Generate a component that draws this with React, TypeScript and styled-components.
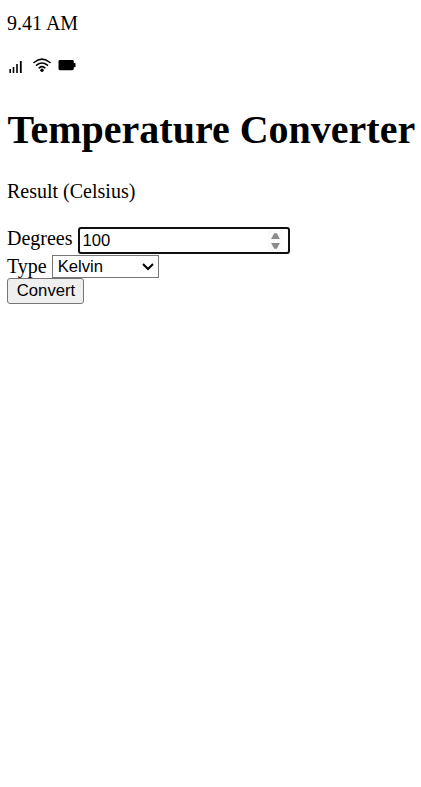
import React, { useState } from "react";
import styled, { createGlobalStyle } from "styled-components";

const GlobalStyle = createGlobalStyle`
  * { box-sizing: border-box; }
  body { margin: 0; background: #fff; color: #000; }
`;

const Page = styled.main`
  display: flex;
  flex-direction: column;
  align-items: flex-start;
  padding: 12px 0 0 7px;
  font-family: "Liberation Serif", "Times New Roman", serif;
  font-size: 20px;
  line-height: 23px;
  white-space: nowrap;
`;

const Time = styled.div`
  height: 23px;
`;

const StatusIcons = styled.div`
  display: flex;
  align-items: flex-start;
  height: 20px;
  margin-top: 21px;
  padding-left: 2px;
`;

const StatusIcon = styled.svg<{ $gap?: number }>`
  display: block;
  flex: none;
  margin-left: ${({ $gap = 0 }) => $gap}px;
`;

const Title = styled.h1`
  margin: 31px 0 0;
  padding-left: 0.5px;
  font-size: 40px;
  font-weight: 700;
  line-height: 46px;
`;

const Result = styled.p`
  margin: 27px 0 0;
`;

const Form = styled.form`
  display: flex;
  flex-direction: column;
  align-items: flex-start;
  margin-top: 24px;
`;

const Row = styled.label<{ $height: number }>`
  display: flex;
  align-items: flex-start;
  gap: 5px;
  height: ${({ $height }) => $height}px;
`;

const Field = styled.span`
  display: flex;
  width: 212px;
  height: 27px;
  padding-right: 5px;
  border: 2px solid #101010;
  border-radius: 3px;
  background: #fff;
`;

const NumberInput = styled.input`
  flex: 1;
  min-width: 0;
  padding: 0 0 0 3px;
  border: 0;
  outline: 0;
  background: transparent;
  color: #000;
  font: 16.67px/23px "Liberation Sans", Arial, sans-serif;
`;

const Spinner = styled.svg`
  display: block;
  flex: none;
  margin-top: 1px;
`;

const SelectBox = styled.span`
  display: flex;
  align-items: center;
  justify-content: space-between;
  width: 107px;
  height: 23px;
  padding: 0 4px 0 5px;
  border: 1px solid #767676;
  background: #fff;
  font: 16.67px/21px "Liberation Sans", Arial, sans-serif;
`;

const ConvertButton = styled.button`
  width: 77px;
  height: 26px;
  padding: 0 0 0 1px;
  border: 1px solid #767676;
  border-radius: 3px;
  background: #efefef;
  color: #000;
  font: 16.67px/22px "Liberation Sans", Arial, sans-serif;
`;

export default function App() {
  const [degrees, setDegrees] = useState("100");
  return (
    <>
      <GlobalStyle />
      <Page>
        <Time>9.41 AM</Time>
        <StatusIcons>
          <StatusIcon width="14" height="20" viewBox="0 0 14 20">
            <path d="M.4 13H2v4H.4zM3.7 11h1.6v6H3.7zM7.2 8h1.6v9H7.2zM10.9 5h1.8v12h-1.8z" />
          </StatusIcon>
          <StatusIcon $gap={10} width="18" height="18" viewBox="0 0 18 18" fill="none" stroke="#000" strokeWidth="1.6" strokeLinecap="round">
            <path d="M1 6.5Q9-.1 17 6.5M3.6 9.2Q9 4.8 14.4 9.2M6.2 11.8Q9 9.5 11.8 11.8" />
            <circle cx="9" cy="14.3" r="1.7" fill="#000" stroke="none" />
          </StatusIcon>
          <StatusIcon $gap={7} width="18" height="18" viewBox="0 0 18 18">
            <rect x=".5" y="4" width="15.3" height="10.2" rx="1.4" />
            <rect x="15" y="7" width="2.5" height="4.2" rx=".7" />
          </StatusIcon>
        </StatusIcons>
        <Title>Temperature Converter</Title>
        <Result>Result (Celsius)</Result>
        <Form onSubmit={(e) => e.preventDefault()}>
          <Row $height={28}>
            Degrees
            <Field>
              <NumberInput value={degrees} onChange={(e) => setDegrees(e.target.value)} />
              <Spinner width="15" height="21" viewBox="0 0 15 21">
                <path fill="#fafafa" d="M0 0h15v21H0z" />
                <path fill="#8b8b8b" d="M3.1 9L6.2 3.2h2.6L11.9 9zM3.1 13h8.8l-3.1 5.8H6.2z" />
              </Spinner>
            </Field>
          </Row>
          <Row $height={23}>
            Type
            <SelectBox>
              Kelvin
              <svg width="12" height="8" viewBox="0 0 12 8" fill="none" stroke="#000" strokeWidth="2">
                <path d="M1 1l5 5 5-5" />
              </svg>
            </SelectBox>
          </Row>
          <ConvertButton type="submit">Convert</ConvertButton>
        </Form>
      </Page>
    </>
  );
}
